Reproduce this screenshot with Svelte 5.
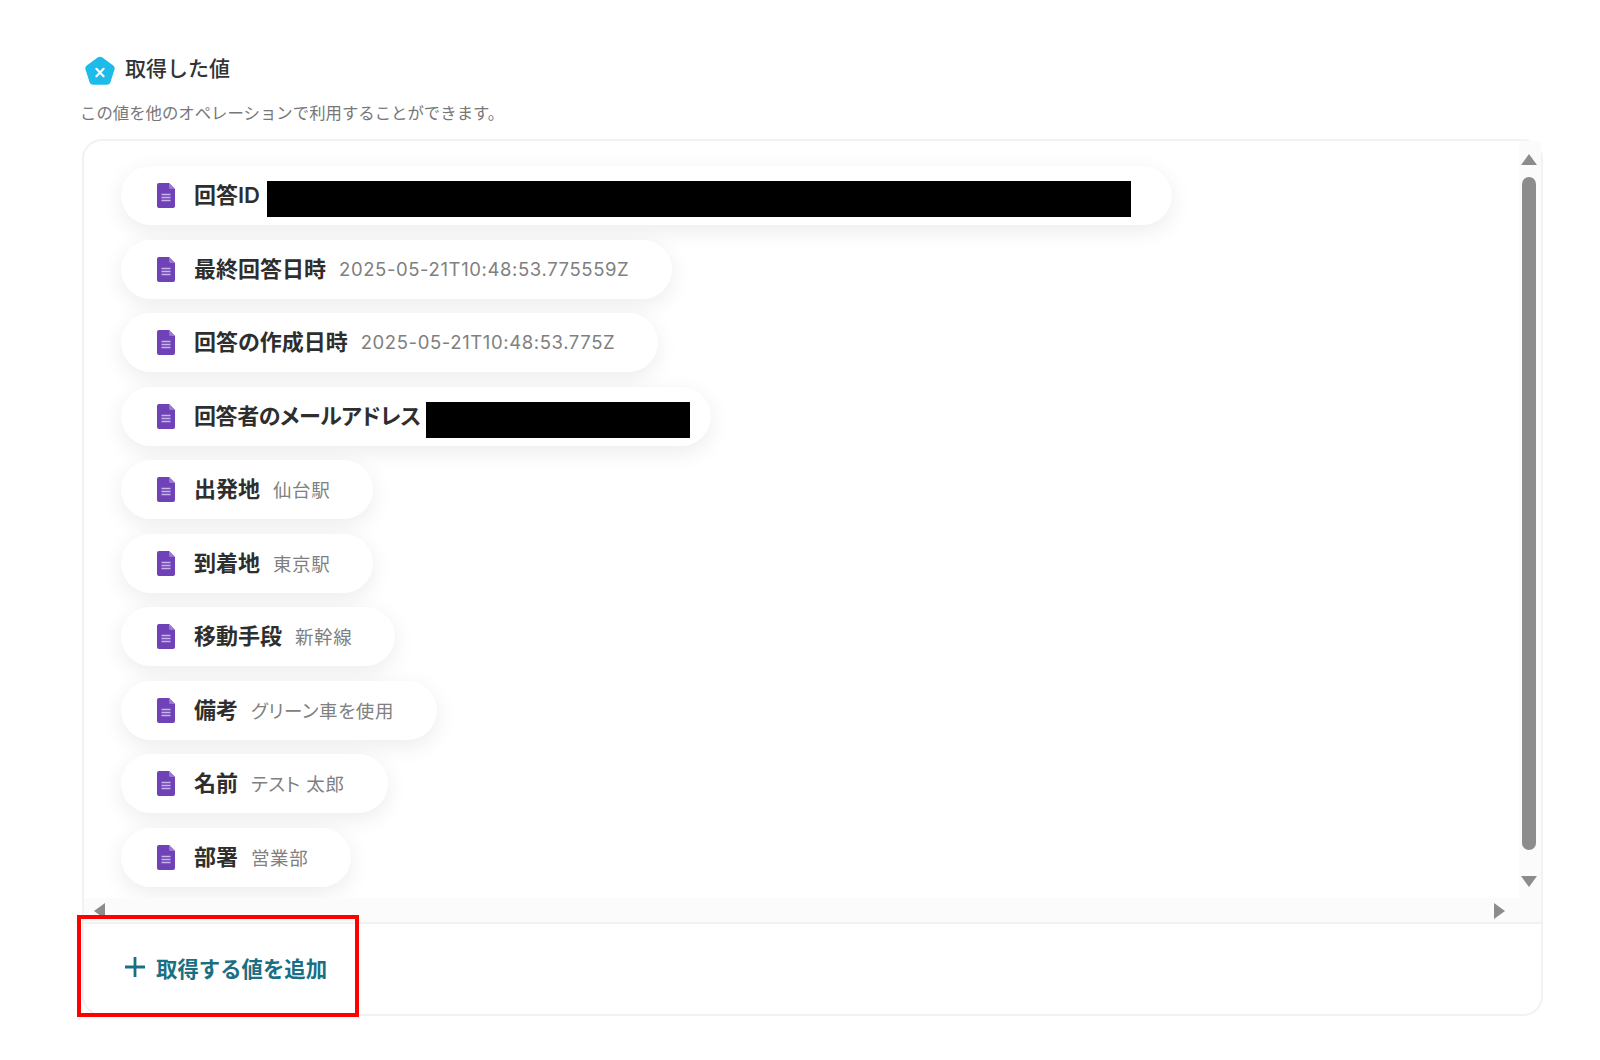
<script>
    const fields = [
        { label: '回答ID', mask: 864, gap: 7, after: -2 },
        { label: '最終回答日時', value: '2025-05-21T10:48:53.775559Z' },
        { label: '回答の作成日時', value: '2025-05-21T10:48:53.775Z' },
        { label: '回答者のメールアドレス', mask: 264, gap: 5, after: -22, tight: true },
        { label: '出発地', value: '仙台駅' },
        { label: '到着地', value: '東京駅' },
        { label: '移動手段', value: '新幹線' },
        { label: '備考', value: 'グリーン車を使用' },
        { label: '名前', value: 'テスト 太郎' },
        { label: '部署', value: '営業部' }
    ];
</script>

<main class="page">
    <div class="heading">
        <svg class="logo" viewBox="0 0 32 32" width="32" height="32">
            <path d="M13.6 1.6a4 4 0 0 1 4.8 0l10.8 8a3.6 3.6 0 0 1 1.3 4l-4 12.4a4 4 0 0 1-3.8 2.8H9.3a4 4 0 0 1-3.8-2.8l-4-12.4a3.6 3.6 0 0 1 1.3-4z" fill="#1cbbea" />
            <path d="M12.400 12.800l7.200 7.400M19.600 12.800l-7.200 7.400" stroke="#fff" stroke-width="2.200" stroke-linecap="round" />
        </svg>
        <h2>取得した値</h2>
    </div>
    <p class="note">この値を他のオペレーションで利用することができます。</p>

    <section class="card">
        <div class="scroller">
            <ul class="list">
                {#each fields as field}
                    <li class="pill">
                        <svg class="doc" viewBox="0 0 18 25" width="18" height="25">
                            <path d="M2 0h10l6 6v17a2 2 0 0 1-2 2H2a2 2 0 0 1-2-2V2a2 2 0 0 1 2-2z" fill="#6f42b8" />
                            <path d="M12 0l6 6h-4.500a1.500 1.500 0 0 1-1.500-1.500z" fill="#9a78d2" />
                            <path d="M4.500 11.500h9M4.500 14.500h9M4.500 17.500h9" stroke="#c9b6e8" stroke-width="1.500" />
                        </svg>
                        <span class="label" class:tight={field.tight}>{field.label}</span>
                        {#if field.mask}
                            <span class="mask" style="width: {field.mask}px; margin-left: {field.gap}px; margin-right: {field.after}px"></span>
                        {:else}
                            <span class="value">{field.value}</span>
                        {/if}
                    </li>
                {/each}
            </ul>
            <div class="vbar">
                <span class="arrow up"></span>
                <span class="thumb"></span>
                <span class="arrow down"></span>
            </div>
            <div class="hbar">
                <span class="arrow left"></span>
                <span class="arrow right"></span>
            </div>
        </div>
        <div class="footer">
            <button class="add">
                <svg viewBox="0 0 20 20" width="20" height="20">
                    <path d="M10 0v20M0 10h20" stroke="#1a6f85" stroke-width="2.800" />
                </svg>
                取得する値を追加
            </button>
        </div>
        <div class="highlight"></div>
    </section>
</main>

<style>
    :global(body) {
        background: #fff;
    }

    .page {
        height: 1060px;
        box-sizing: border-box;
        padding: 55px 57px 0 81px;
        font-family: "Inter", "Noto Sans CJK JP", sans-serif;
        color: #2b2b2b;
    }

    .heading {
        display: flex;
        align-items: center;
        gap: 9px;
        margin-left: 3px;
        height: 30px;
    }

    .logo {
        margin-top: 4px;
    }

    h2 {
        margin: 0 0 2px;
        font-size: 21px;
        font-weight: 500;
        line-height: 30px;
        color: #333;
    }

    .note {
        margin: 16px 0 0 -1px;
        font-size: 16.400px;
        line-height: 24px;
        color: #777;
    }

    .card {
        position: relative;
        box-sizing: border-box;
        height: 877px;
        margin: 14px 0 0 1px;
        border: 2px solid #f2f2f2;
        border-radius: 20px;
    }

    .scroller {
        display: grid;
        grid-template-columns: 1fr 22px;
        grid-template-rows: 757px 24px;
        height: 781px;
        border-bottom: 2px solid #f2f2f2;
    }

    .list {
        list-style: none;
        display: flex;
        flex-direction: column;
        align-items: flex-start;
        gap: 14.500px;
        margin: 0;
        padding: 25px 0 0 37px;
    }

    .pill {
        display: flex;
        align-items: center;
        box-sizing: border-box;
        height: 59px;
        padding: 0 43px 0 36px;
        border-radius: 30px;
        background: #fff;
        box-shadow: 0 6px 22px rgba(0, 0, 0, 0.08);
    }

    .doc {
        flex: none;
        margin: 0 19px 0 0;
    }

    .label {
        margin-bottom: 5px;
        font-size: 22px;
        font-weight: 600;
        font-feature-settings: "palt";
        white-space: nowrap;
        color: #2e2e2e;
    }

    .tight {
        letter-spacing: -0.400px;
    }

    .value {
        margin: 0 0 1px 13px;
        font-size: 18.500px;
        letter-spacing: 0.600px;
        font-feature-settings: "palt";
        white-space: nowrap;
        color: #808080;
    }

    .mask {
        height: 36px;
        margin-top: 7px;
        background: #000;
    }

    .vbar {
        display: flex;
        flex-direction: column;
        align-items: center;
        background: #fbfbfb;
        padding: 13px 2px 0 0;
    }

    .thumb {
        width: 14px;
        height: 673px;
        margin: 12px 0 26px;
        border-radius: 7px;
        background: #8c8c8c;
    }

    .hbar {
        grid-column: 1 / 3;
        display: flex;
        justify-content: space-between;
        align-items: center;
        padding: 2px 36px 0 10px;
        background: #fbfbfb;
    }

    .arrow {
        width: 0;
        height: 0;
        border-style: solid;
        border-color: transparent;
    }

    .up {
        border-width: 0 8px 11px;
        border-bottom-color: #8c8c8c;
    }

    .down {
        border-width: 11px 8px 0;
        border-top-color: #8c8c8c;
    }

    .left {
        border-width: 8px 11px 8px 0;
        border-right-color: #8c8c8c;
    }

    .right {
        border-width: 8px 0 8px 11px;
        border-left-color: #8c8c8c;
    }

    .footer {
        display: flex;
        align-items: center;
        box-sizing: border-box;
        height: 89px;
        padding: 0 0 3px 41px;
    }

    .add {
        display: flex;
        align-items: center;
        gap: 11px;
        padding: 0;
        border: 0;
        background: none;
        font: inherit;
        font-size: 21.400px;
        font-weight: 600;
        color: #1a6f85;
    }

    .highlight {
        position: absolute;
        left: -7px;
        top: 774px;
        width: 282px;
        height: 102px;
        box-sizing: border-box;
        border: 4px solid #f00;
    }
</style>
